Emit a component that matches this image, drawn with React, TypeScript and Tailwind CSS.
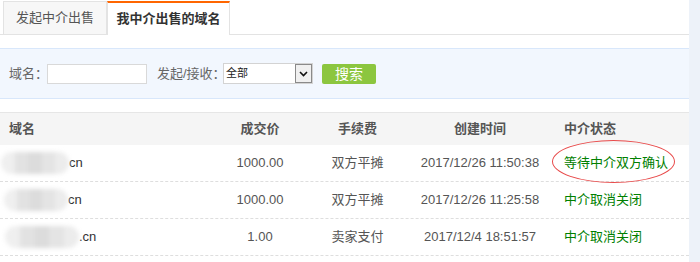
import React from "react";

const font = { fontFamily: '"Liberation Sans", "Noto Sans CJK SC", sans-serif' };

function Blob({ w, ml = 0 }: { w: number; ml?: number }) {
  return (
    <span className="relative inline-block h-[22px] align-middle" style={{ width: w, marginLeft: ml }}>
      <span className="absolute inset-0 flex rounded-full overflow-hidden blur-[2px]">
        <span className="flex-1 bg-[#efefef]" />
        <span className="flex-1 bg-[#e2e2e2]" />
        <span className="flex-1 bg-[#dcdcdc]" />
        <span className="flex-1 bg-[#e4e4e4]" />
        <span className="flex-1 bg-[#ececec]" />
      </span>
    </span>
  );
}

const rows = [
  { blob: 68, ml: 1, tld: "cn", price: "1000.00", fee: "双方平摊", time: "2017/12/26 11:50:38", status: "等待中介双方确认", circled: true },
  { blob: 64, ml: 4, tld: "cn", price: "1000.00", fee: "双方平摊", time: "2017/12/26 11:25:58", status: "中介取消关闭", circled: false },
  { blob: 74, ml: 5, tld: ".cn", price: "1.00", fee: "卖家支付", time: "2017/12/4 18:51:57", status: "中介取消关闭", circled: false },
];

export default function App() {
  return (
    <div className="flex w-[700px] h-[262px] bg-white overflow-hidden text-[13px] text-[#555]" style={font}>
      <div className="w-[689px] flex flex-col">
        {/* tabs */}
        <div className="h-[35px] pt-[1px] pl-[3px] flex items-end border-b border-[#e3e3e3]">
          <div className="h-[34px] w-[104px] -mb-px border border-[#e3e3e3] bg-[#f7f7f7] flex items-center justify-center text-[#555]">
            发起中介出售
          </div>
          <div className="h-[34px] w-[123px] -mb-px border-x border-[#e3e3e3] border-t-2 border-t-[#ff6600] bg-white flex items-center justify-center font-bold text-[#333]">
            我中介出售的域名
          </div>
        </div>

        {/* filter */}
        <div className="mt-[13px] h-[51px] border-y border-[#d8e7fb] bg-[#f2f7fe] flex items-center pl-[9px] text-[#666]">
          <span className="w-[38px] whitespace-nowrap">域名：</span>
          <div className="w-[100px] h-[20px] border border-[#d9d9d9] bg-white" />
          <span className="ml-[10px] w-[66px] whitespace-nowrap">发起/接收：</span>
          <div className="w-[90px] h-[21px] border border-[#d3d3d3] bg-white flex items-center">
            <span className="flex-1 pl-[2px] text-[11px] text-[#222]">全部</span>
            <span className="w-[17px] h-[19px] border border-[#8a8a8a] bg-[#f0f0f0] flex items-center justify-center">
              <svg width="9" height="6" viewBox="0 0 9 6">
                <path d="M1 1 L4.5 4.5 L8 1" fill="none" stroke="#111" strokeWidth="1.6" />
              </svg>
            </span>
          </div>
          <button className="ml-[9px] w-[54px] h-[20px] rounded-[2px] bg-[#8cc63f] text-white text-[14px] leading-none flex items-center justify-center">
            搜索
          </button>
        </div>

        {/* table */}
        <div className="mt-[13px]">
          <div className="h-[33px] border-t border-[#e6e6e6] bg-[#f5f5f5] flex items-center font-bold text-[#555]">
            <div className="w-[210px] pl-[9px]">域名</div>
            <div className="w-[100px] text-center">成交价</div>
            <div className="w-[95px] text-center">手续费</div>
            <div className="w-[150px] text-center">创建时间</div>
            <div className="flex-1 pl-[9px]">中介状态</div>
          </div>
          {rows.map((r, i) => (
            <div key={i} className="h-[37px] border-b border-dashed border-[#dedede] flex items-center">
              <div className="w-[210px] flex items-center text-[#333]">
                <Blob w={r.blob} ml={r.ml} />
                <span>{r.tld}</span>
              </div>
              <div className="w-[100px] text-center">{r.price}</div>
              <div className="w-[95px] text-center">{r.fee}</div>
              <div className="w-[150px] text-center">{r.time}</div>
              <div className="flex-1 pl-[9px] text-[#008000] relative">
                <span className="relative">
                  {r.status}
                  {r.circled && (
                    <span className="absolute left-[-12px] top-[-15px] w-[123px] h-[43px] rounded-[50%] border border-[#e84a4a]" />
                  )}
                </span>
              </div>
            </div>
          ))}
        </div>
      </div>
      <div className="w-[11px] bg-[#edf2f9]" />
    </div>
  );
}
